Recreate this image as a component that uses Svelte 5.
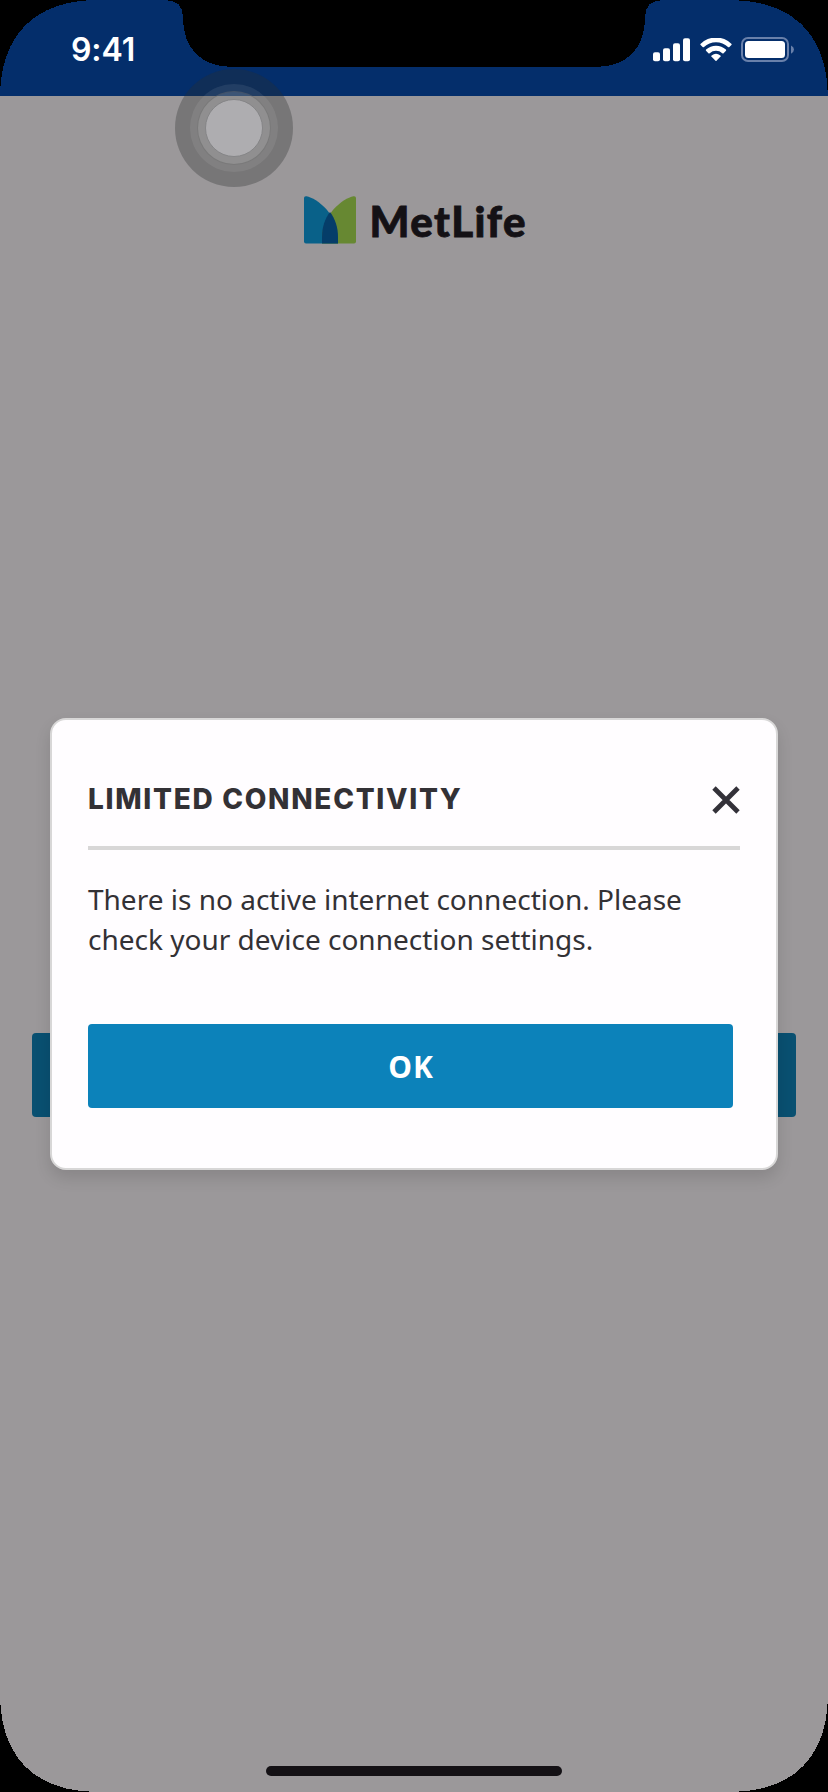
<script>
  const bars = [
    { x: 0, h: 9 },
    { x: 10, h: 13 },
    { x: 20, h: 18 },
    { x: 30, h: 23 }
  ];
</script>

<div class="phone">
  <header class="status">
    <span class="time">9:41</span>
    <div class="indicators">
      <svg width="37" height="24" viewBox="0 0 37 24">
        {#each bars as bar}
          <rect x={bar.x} y={23.3 - bar.h} width="7" height={bar.h} rx="2" fill="#fff" />
        {/each}
      </svg>
      <svg class="wifi" width="32" height="24" viewBox="0 0 32 24" fill="#fff">
        <path d="M.6 7Q0 6.300 .7 5.700A22 22 0 0 1 31.300 5.700Q32 6.300 31.400 7L29.400 9Q28.700 9.700 28 9A17.500 17.500 0 0 0 4 9Q3.300 9.700 2.600 9Z" />
        <path d="M6 12.800Q5.500 12.200 6.100 11.600A14.500 14.500 0 0 1 25.900 11.600Q26.500 12.200 26 12.800L23.600 15.200Q23 15.700 22.300 15.200A9.500 9.500 0 0 0 9.700 15.200Q9 15.700 8.400 15.200Z" />
        <path d="M11.400 18.600Q11 18 11.600 17.500A7.200 7.200 0 0 1 20.400 17.500Q21 18 20.600 18.600L16.500 22.800Q16 23.300 15.500 22.800Z" />
      </svg>
      <svg class="battery" width="54" height="26" viewBox="0 0 54 26">
        <rect x="1" y="1" width="46" height="23" rx="6" fill="none" stroke="#6980aa" stroke-width="2" />
        <rect x="4" y="4" width="40" height="17" rx="3.500" fill="#fff" />
        <path d="M50 8.500Q53 10 53 12.500T50 16.700Z" fill="#6980aa" />
      </svg>
    </div>
  </header>

  <main>
    <div class="brand">
      <svg width="52" height="48" viewBox="0 0 52 48">
        <path d="M0 2Q0 0 2.500 .3C13 2.500 34 18 34 43V47.500H2Q0 47.500 0 45.500Z" fill="#096189" />
        <path d="M52 2Q52 0 49.500 .3C39 2.500 18 18 18 43V47.500H50Q52 47.500 52 45.500Z" fill="#678832" />
        <path d="M26 16C31 22.500 34 31 34 41V47.500H18V41C18 31 21 22.500 26 16Z" fill="#053d69" />
      </svg>
      <span class="wordmark">MetLife</span>
    </div>
    <div class="page-action"></div>
  </main>

  <div class="home-bar"></div>

  <section class="dialog" role="dialog" aria-labelledby="dialog-title">
    <div class="heading">
      <h1 id="dialog-title">LIMITED CONNECTIVITY</h1>
      <svg class="close" width="28" height="28" viewBox="0 0 28 28">
        <path d="M2 2L26 26M26 2L2 26" stroke="#333139" stroke-width="4.800" />
      </svg>
    </div>
    <p>There is no active internet connection. Please<br />check your device connection settings.</p>
    <button>OK</button>
  </section>

  <div class="touch"><i class="mid"></i><i class="inner"></i><i class="core"></i></div>

  <svg class="bezel" width="828" height="1792" viewBox="0 0 828 1792" shape-rendering="crispEdges">
    <path d="M0 0H98C35 0 0 35 0 98Z" />
    <path d="M828 0H730C793 0 828 35 828 98Z" />
    <path d="M0 1792H98C35 1792 0 1757 0 1694Z" />
    <path d="M828 1792H730C793 1792 828 1757 828 1694Z" />
    <path d="M164 0C177 0 183 5 183 18C183 46 199 67 233 67H595C629 67 645 46 645 18C645 5 651 0 664 0Z" />
  </svg>
</div>

<style>
  :global(body) { margin: 0; background: #000; }
  .phone {
    position: relative;
    display: flex;
    flex-direction: column;
    width: 828px;
    height: 1792px;
    overflow: hidden;
    background: #9b989a;
    font-family: "Noto Sans", sans-serif;
  }
  .status {
    display: flex;
    justify-content: space-between;
    align-items: center;
    box-sizing: border-box;
    height: 96px;
    padding: 3px 33px 0 71px;
    background: #042e6b;
  }
  .time { color: #fff; font: 600 32px/36px Inter, sans-serif; letter-spacing: -.1px; }
  .indicators { display: flex; align-items: center; }
  .wifi { margin-left: 10px; }
  .battery { margin-left: 9px; }
  main { flex: 1; display: flex; flex-direction: column; }
  .brand { display: flex; justify-content: center; height: 48px; margin-top: 100px; }
  .wordmark {
    width: 157px;
    margin-left: 13px;
    margin-right: -1px;
    color: #141115;
    font: 900 42px/50px Lato, sans-serif;
    letter-spacing: 1.4px;
    -webkit-text-stroke: .8px #141115;
    text-indent: 1px;
    white-space: nowrap;
  }
  .page-action { height: 84px; margin: 789px 32px 0; border-radius: 4px; background: #095071; }
  .home-bar { width: 296px; height: 10px; margin: 0 auto 16px; border-radius: 5px; background: #141115; }
  .dialog {
    position: absolute;
    top: 718px;
    left: 50px;
    box-sizing: border-box;
    width: 728px;
    height: 452px;
    padding: 0 36px;
    border: 2px solid #d8d7d7;
    border-radius: 16px;
    background: #fffdff;
    box-shadow: 0 8px 16px rgba(0, 0, 0, .12);
    color: #333135;
  }
  .heading {
    display: flex;
    justify-content: space-between;
    align-items: center;
    box-sizing: border-box;
    height: 130px;
    padding-top: 31px;
    border-bottom: 4px solid #d8d7d7;
  }
  h1 { margin: 0; font: 800 28px/34px Inter, sans-serif; letter-spacing: 1.7px; white-space: nowrap; }
  .close { margin-top: 3px; }
  p { margin: 29px 0 0; font-size: 28px; line-height: 40px; white-space: nowrap; }
  button {
    display: block;
    width: 645px;
    height: 84px;
    margin-top: 65px;
    padding: 2px 0 0 1px;
    border: 0;
    border-radius: 4px;
    background: #0c82ba;
    color: #fff;
    font: 700 30px/40px "Noto Sans", sans-serif;
    letter-spacing: 1px;
  }
  .touch {
    position: absolute;
    top: 69px;
    left: 175px;
    width: 118px;
    height: 118px;
    border-radius: 50%;
    background: rgba(43, 46, 48, .32);
  }
  .touch i { position: absolute; box-sizing: border-box; border-radius: 50%; }
  .mid { inset: 15px; background: rgba(255, 255, 255, .08); }
  .inner { inset: 22px; border: 1px solid rgba(80, 80, 80, .35); background: rgba(255, 255, 255, .12); }
  .core { inset: 30px; border: 1px solid #858587; background: #aeadb0; }
  .bezel { position: absolute; inset: 0; pointer-events: none; }
</style>
